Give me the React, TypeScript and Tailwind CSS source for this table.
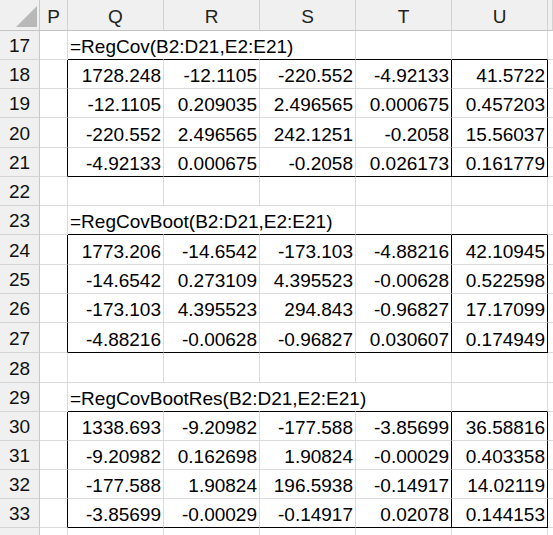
import React from "react";

const GRID = "border-[#dadada]";

type RowDef = { n: number; h: number; kind: "formula" | "data" | "empty"; text?: string; spill?: number; values?: string[]; block?: "first" | "mid" | "last" };

const blocks: string[][][] = [
  [
    ["1728.248", "-12.1105", "-220.552", "-4.92133", "41.5722"],
    ["-12.1105", "0.209035", "2.496565", "0.000675", "0.457203"],
    ["-220.552", "2.496565", "242.1251", "-0.2058", "15.56037"],
    ["-4.92133", "0.000675", "-0.2058", "0.026173", "0.161779"],
  ],
  [
    ["1773.206", "-14.6542", "-173.103", "-4.88216", "42.10945"],
    ["-14.6542", "0.273109", "4.395523", "-0.00628", "0.522598"],
    ["-173.103", "4.395523", "294.843", "-0.96827", "17.17099"],
    ["-4.88216", "-0.00628", "-0.96827", "0.030607", "0.174949"],
  ],
  [
    ["1338.693", "-9.20982", "-177.588", "-3.85699", "36.58816"],
    ["-9.20982", "0.162698", "1.90824", "-0.00029", "0.403358"],
    ["-177.588", "1.90824", "196.5938", "-0.14917", "14.02119"],
    ["-3.85699", "-0.00029", "-0.14917", "0.02078", "0.144153"],
  ],
];

const heights: Record<number, number> = {
  17: 29, 18: 29, 19: 29, 20: 30, 21: 29, 22: 29, 23: 29, 24: 30, 25: 29,
  26: 29, 27: 30, 28: 30, 29: 29, 30: 29, 31: 29, 32: 29, 33: 29, 34: 29,
};

function buildRows(): RowDef[] {
  const rows: RowDef[] = [];
  const formulas = [
    { text: "=RegCov(B2:D21,E2:E21)", spill: 2 },
    { text: "=RegCovBoot(B2:D21,E2:E21)", spill: 2 },
    { text: "=RegCovBootRes(B2:D21,E2:E21)", spill: 3 },
  ];
  let n = 17;
  blocks.forEach((b, bi) => {
    rows.push({ n, h: heights[n], kind: "formula", text: formulas[bi].text, spill: formulas[bi].spill });
    n++;
    b.forEach((vals, i) => {
      rows.push({ n, h: heights[n], kind: "data", values: vals, block: i === b.length - 1 ? "last" : "mid" });
      n++;
    });
    rows.push({ n, h: heights[n], kind: "empty" });
    n++;
  });
  return rows;
}

function hClass(h: number) {
  if (h === 30) return "h-[30px]";
  return "h-[29px]";
}

export default function App() {
  const rows = buildRows();
  const cols = ["P", "Q", "R", "S", "T", "U", ""];
  return (
    <div className="w-[553px] h-[535px] overflow-hidden bg-white font-['Liberation_Sans',Arial,sans-serif] text-[19px] leading-[19px] text-black">
      <div className="grid grid-cols-[40px_28px_96px_96px_96px_96px_96px_1fr]">
        {/* header row */}
        <div className="h-[31px] bg-[#f0f0f0] border-r border-b border-r-[#c8c8c8] border-b-[#c4c4c4] relative">
          <svg className="absolute left-[16px] top-[6px]" width="21" height="21" viewBox="0 0 21 21">
            <polygon points="21,0 21,21 0,21" fill="#b8b8b8" />
          </svg>
        </div>
        {cols.map((c, i) => (
          <div
            key={"h" + i}
            className="h-[31px] bg-[#f0f0f0] border-r border-b border-r-[#d2d2d2] border-b-[#c4c4c4] flex items-end justify-center pb-[4px] text-[#222]"
          >
            {c}
          </div>
        ))}
        {rows.map((r) => {
          const h = hClass(r.h);
          const cells: React.ReactNode[] = [];
          cells.push(
            <div
              key={r.n + "-hdr"}
              className={`${h} bg-[#f0f0f0] border-r border-b border-r-[#c8c8c8] border-b-[#d4d4d4] flex items-end justify-center pb-[4px] text-[#111]`}
            >
              {r.n}
            </div>
          );
          const inBlock = r.kind === "data";
          // P column
          cells.push(
            <div
              key={r.n + "-P"}
              className={`${h} border-b ${GRID} border-r ${inBlock ? "border-r-black" : "border-r-[#dadada]"}`}
            />
          );
          for (let c = 0; c < 5; c++) {
            let rightBlack = inBlock && (c === 3 || c === 4);
            let bottomBlack = r.kind === "formula" || (inBlock && r.block === "last");
            let rightHidden = r.kind === "formula" && c < (r.spill ?? 0);
            const rc = rightBlack ? "border-r-black" : rightHidden ? "border-r-white" : "border-r-[#dadada]";
            const bc = bottomBlack ? "border-b-black" : "border-b-[#dadada]";
            let content: React.ReactNode = null;
            if (r.kind === "formula" && c === 0) {
              content = (
                <span className="relative z-10 whitespace-nowrap pl-[2px]">{r.text}</span>
              );
            } else if (inBlock) {
              content = <span className="pr-[2px]">{r.values![c]}</span>;
            }
            cells.push(
              <div
                key={r.n + "-" + c}
                className={`${h} border-r border-b ${rc} ${bc} flex items-end pb-[3px] ${inBlock ? "justify-end" : "justify-start"} overflow-visible`}
              >
                {content}
              </div>
            );
          }
          cells.push(<div key={r.n + "-V"} className={`${h} border-b border-b-[#dadada]`} />);
          return <React.Fragment key={r.n}>{cells}</React.Fragment>;
        })}
        {/* partial row 34 */}
        <div className="h-[29px] bg-[#f0f0f0] border-r border-r-[#c8c8c8]" />
        <div className="h-[29px] border-r border-r-[#dadada]" />
        <div className="h-[29px] border-r border-r-[#dadada]" />
        <div className="h-[29px] border-r border-r-[#dadada]" />
        <div className="h-[29px] border-r border-r-[#dadada]" />
        <div className="h-[29px] border-r border-r-[#dadada]" />
        <div className="h-[29px] border-r border-r-[#dadada]" />
        <div className="h-[29px]" />
      </div>
    </div>
  );
}
